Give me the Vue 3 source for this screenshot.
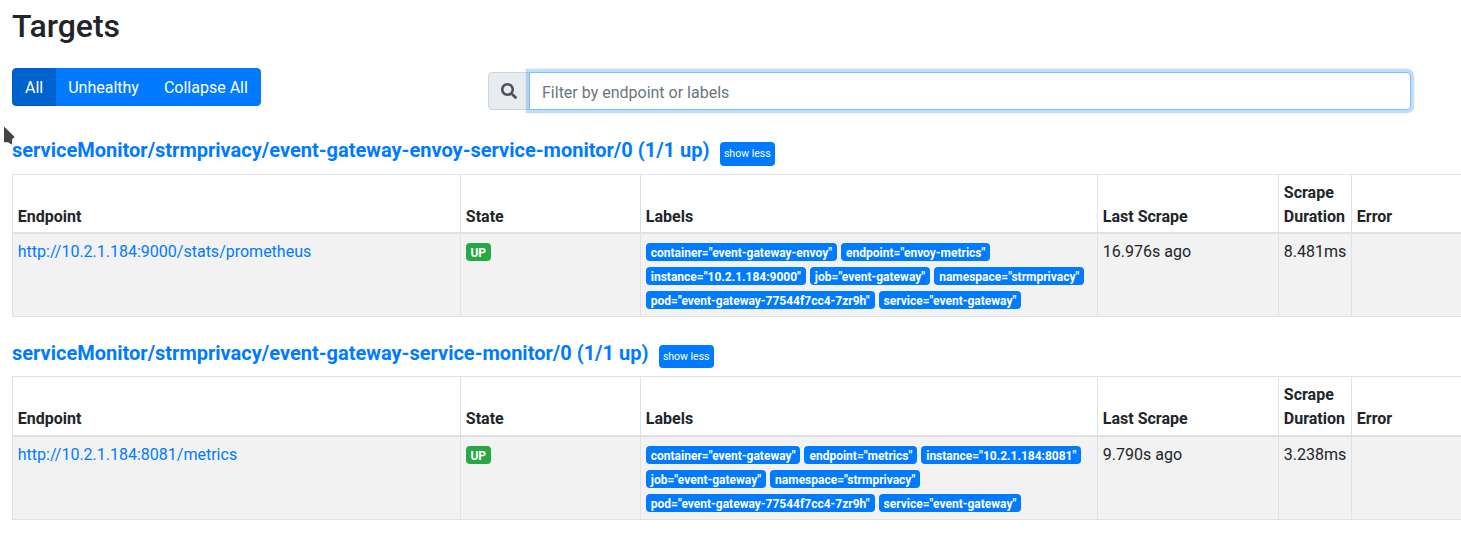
<script setup>
const columns = ['Endpoint', 'State', 'Labels', 'Last Scrape', 'Scrape Duration', 'Error']

const pools = [
  {
    name: 'serviceMonitor/strmprivacy/event-gateway-envoy-service-monitor/0 (1/1 up)',
    endpoint: 'http://10.2.1.184:9000/stats/prometheus',
    labels: [
      'container="event-gateway-envoy"',
      'endpoint="envoy-metrics"',
      'instance="10.2.1.184:9000"',
      'job="event-gateway"',
      'namespace="strmprivacy"',
      'pod="event-gateway-77544f7cc4-7zr9h"',
      'service="event-gateway"',
    ],
    lastScrape: '16.976s ago',
    duration: '8.481ms',
  },
  {
    name: 'serviceMonitor/strmprivacy/event-gateway-service-monitor/0 (1/1 up)',
    endpoint: 'http://10.2.1.184:8081/metrics',
    labels: [
      'container="event-gateway"',
      'endpoint="metrics"',
      'instance="10.2.1.184:8081"',
      'job="event-gateway"',
      'namespace="strmprivacy"',
      'pod="event-gateway-77544f7cc4-7zr9h"',
      'service="event-gateway"',
    ],
    lastScrape: '9.790s ago',
    duration: '3.238ms',
  },
]
</script>

<template>
  <main class="page">
    <h2 class="title">Targets</h2>
    <div class="toolbar">
      <div class="btn-group">
        <button class="btn active">All</button>
        <button class="btn">Unhealthy</button>
        <button class="btn">Collapse All</button>
      </div>
      <div class="search">
        <span class="search-icon">
          <svg viewBox="0 0 512 512" width="16" height="16">
            <path fill="currentColor" d="M505 442.7L405.3 343c-4.500-4.500-10.600-7-17-7H372c27.600-35.300 44-79.700 44-128C416 93.100 322.900 0 208 0S0 93.100 0 208s93.100 208 208 208c48.300 0 92.700-16.400 128-44v16.300c0 6.400 2.500 12.500 7 17l99.700 99.700c9.400 9.400 24.600 9.400 33.900 0l28.300-28.300c9.400-9.400 9.400-24.600.1-34zM208 336c-70.700 0-128-57.200-128-128 0-70.700 57.200-128 128-128 70.700 0 128 57.200 128 128 0 70.700-57.200 128-128 128z" />
          </svg>
        </span>
        <input class="search-input" type="text" placeholder="Filter by endpoint or labels" />
      </div>
    </div>

    <section v-for="pool in pools" :key="pool.name" class="pool">
      <h3 class="pool-head">
        <a class="pool-name">{{ pool.name }}</a>
        <button class="toggle">show less</button>
      </h3>
      <table class="table">
        <colgroup>
          <col class="c-endpoint" />
          <col class="c-state" />
          <col class="c-labels" />
          <col class="c-last" />
          <col class="c-duration" />
          <col class="c-error" />
        </colgroup>
        <thead>
          <tr>
            <th v-for="c in columns" :key="c">{{ c }}</th>
          </tr>
        </thead>
        <tbody>
          <tr>
            <td><a class="link">{{ pool.endpoint }}</a></td>
            <td><span class="badge up">UP</span></td>
            <td>
              <template v-for="l in pool.labels" :key="l"><span class="badge">{{ l }}</span>{{ ' ' }}</template>
            </td>
            <td>{{ pool.lastScrape }}</td>
            <td>{{ pool.duration }}</td>
            <td></td>
          </tr>
        </tbody>
      </table>
    </section>

    <svg class="cursor" viewBox="0 0 16 24" width="16" height="24">
      <path d="M2 2.500 L2 18.300 L6 18.300 L10 20.700 L10 15.300 L12.700 13 Z" fill="#444" stroke="#fff" stroke-width="2.400" paint-order="stroke" />
    </svg>
  </main>
</template>

<style>
body {
  margin: 0;
  overflow: hidden;
  background: #fff;
}
</style>

<style scoped>
.page,
.page * {
  box-sizing: border-box;
}
.page {
  position: relative;
  width: 1461px;
  height: 541px;
  overflow: hidden;
  padding: 7px 0 0 12px;
  font-family: Roboto, "Liberation Sans", sans-serif;
  font-size: 16px;
  line-height: 24px;
  color: #212529;
}
.title {
  margin: 0;
  height: 61px;
  font-size: 32px;
  font-weight: 500;
  line-height: 38.4px;
}
.toolbar {
  display: flex;
  align-items: flex-start;
  height: 67px;
}
.btn-group {
  display: flex;
  width: 476px;
}
.btn {
  height: 38px;
  margin: 0 0 0 -1px;
  padding: 2px 12px 0;
  border: 1px solid #007bff;
  background: #007bff;
  color: #fff;
  font: inherit;
}
.btn:first-child {
  margin-left: 0;
  border-radius: 4px 0 0 4px;
}
.btn:last-child {
  border-radius: 0 4px 4px 0;
}
.btn.active {
  position: relative;
  background: #0062cc;
  border-color: #005cbf;
}
.search {
  display: flex;
  width: 923px;
  margin-top: 4px;
}
.search-icon {
  display: flex;
  align-items: center;
  justify-content: center;
  width: 42px;
  height: 38px;
  border: 1px solid #ced4da;
  border-radius: 4px 0 0 4px;
  background: #e9ecef;
  color: #495057;
}
.search-input {
  flex: 1;
  height: 38px;
  margin: 0 0 0 -1px;
  padding: 7px 12px 5px;
  border: 1px solid #80bdff;
  border-radius: 0 4px 4px 0;
  outline: 0;
  box-shadow: 0 0 0 3.2px rgba(0, 123, 255, 0.25);
  background: #fff;
  font: inherit;
}
.search-input::placeholder {
  color: #6c757d;
  opacity: 1;
}
.pool {
  height: 202px;
}
.pool-head {
  display: flex;
  align-items: flex-start;
  height: 39px;
  margin: 0;
  font-size: 20px;
  font-weight: 700;
  line-height: 30px;
}
.pool-name {
  color: #007bff;
}
.toggle {
  width: 55px;
  height: 24px;
  margin: 7px 0 0 10.500px;
  padding: 0 0.500px 0 0;
  border: 0;
  border-radius: 4px;
  background: #007bff;
  color: #fff;
  font-family: inherit;
  font-size: 10.500px;
  line-height: 22px;
}
.table {
  width: 1689px;
  table-layout: fixed;
  border-collapse: collapse;
}
.c-endpoint { width: 448px; }
.c-state { width: 180px; }
.c-labels { width: 457px; }
.c-last { width: 181px; }
.c-duration { width: 73px; }
.c-error { width: 350px; }
.table th,
.table td {
  padding: 6.400px 4.800px 3.600px;
  border: 1px solid #dee2e6;
  text-align: left;
  vertical-align: top;
}
.table th {
  padding: 5.800px 4.800px 3.200px;
  border-bottom-width: 2px;
  vertical-align: bottom;
  font-weight: 700;
}
.pool + .pool .pool-head {
  line-height: 32px;
}
.pool + .pool .toggle {
  height: 23px;
  margin-top: 8px;
}
.pool + .pool th {
  padding-bottom: 4.200px;
}
.table tbody tr {
  background: #f2f2f2;
}
.link {
  color: #007bff;
}
.badge {
  display: inline-block;
  padding: 4px 5px 2px;
  border-radius: 4px;
  background: #007bff;
  color: #fff;
  font-size: 12px;
  font-weight: 700;
  line-height: 12px;
  white-space: nowrap;
  vertical-align: baseline;
}
.badge.up {
  padding: 4px 5px 2px 4.600px;
  background: #28a745;
}
.cursor {
  position: absolute;
  left: 2px;
  top: 124px;
}
</style>
